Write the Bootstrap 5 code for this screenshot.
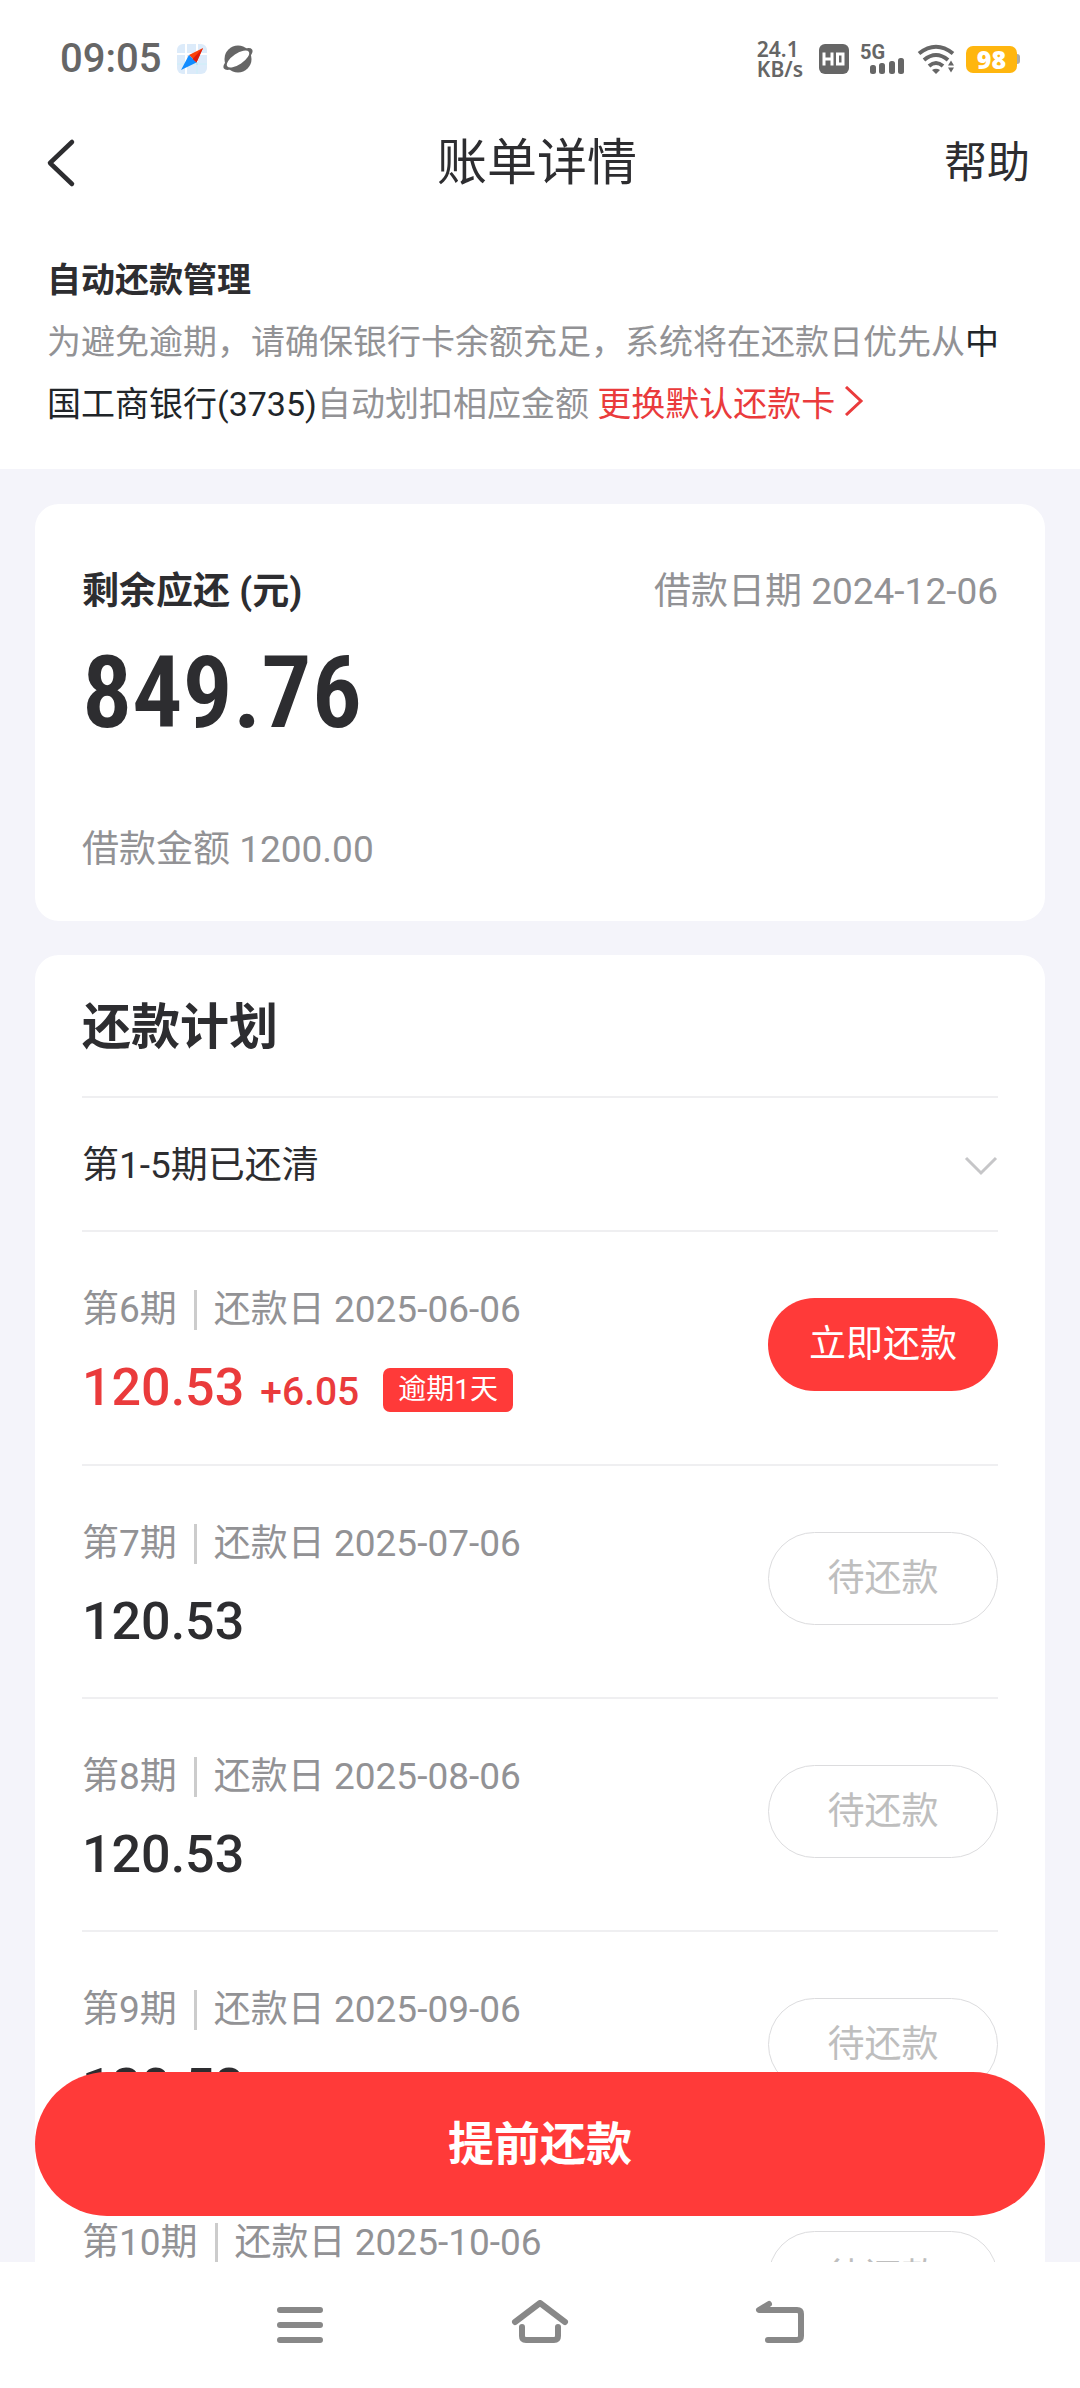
<!DOCTYPE html>
<html lang="zh-CN">
<head>
<meta charset="utf-8">
<meta name="viewport" content="width=device-width, initial-scale=1">
<title>账单详情</title>
<link href="https://cdn.jsdelivr.net/npm/bootstrap@5.3.0/dist/css/bootstrap.min.css" rel="stylesheet">
<style>
:root { --ink: #2d2d30; --muted: #929295; --brand: #ff3a39; --edge: #efeff1; }
body { font-family: Roboto, "Noto Sans CJK SC", sans-serif; font-size: 37px; line-height: 52px; color: var(--ink); background: #f4f4fa; }
svg { display: block; flex: none; }
.status-bar { height: 104px; padding: 14px 60px 0; color: #666; }
.status-time { font-size: 40px; font-weight: 500; line-height: 56px; }
.status-speed { font: 600 21px/20px "Noto Sans", sans-serif; }
.battery-level { width: 51px; height: 27px; border-radius: 7px; background: #ffb60f; font: 800 25px/27px "Open Sans", sans-serif; }
.battery-tip { width: 3px; height: 10px; background: #aaa; border-radius: 0 3px 3px 0; }
.top-bar { height: 118px; padding: 0 50px 0 44px; }
.top-bar > * { flex: 1; }
.page-title { font-size: 50px; font-weight: 400; line-height: 72px; flex: none; }
.help-btn { font-size: 43px; line-height: 60px; color: var(--ink); }
.auto-pay { padding: 27px 60px 34px 47px; font-size: 34px; line-height: 62px; color: var(--muted); }
.section-name { font-size: 34px; font-weight: 700; line-height: 62px; color: var(--ink); }
.brand-link { color: #ea3b3c; }
.panel { border: 0; border-radius: 24px; margin: 0 35px; padding: 0 47px; color: var(--ink); }
.summary { margin-top: 35px; margin-bottom: 34px; padding-top: 62px; padding-bottom: 45px; }
.tone-muted { color: var(--muted); }
.balance { font: 600 100px/110px "Roboto Condensed", Roboto, sans-serif; margin-top: 20px; margin-bottom: 76px; }
.plan-title { font-size: 49px; line-height: 141px; font-weight: 700; padding-top: 2px; margin-bottom: -2px; }
.paid-toggle { height: 134px; border-top: 2px solid var(--edge); color: var(--ink); }
.plan-item { height: 234px; border-top: 2px solid var(--edge); padding: 52px 0 0; }
.plan-item + .plan-item { height: 233px; }
.plan-meta { gap: 17px; color: var(--muted); }
.divider { width: 3px; height: 40px; background: #ccc; }
.amount { font-size: 52px; font-weight: 500; line-height: 60px; }
.late-fee { font-size: 39px; font-weight: 500; line-height: 60px; }
.overdue { font-size: 28px; line-height: 44px; padding: 0 15px; border-radius: 7px; background: var(--brand); color: #fff; }
.tone-brand { color: #ea3b3c; }
.pill { width: 230px; height: 93px; border-radius: 47px; font-size: 37px; line-height: 52px; padding: 0; margin-top: 14px; }
.pill-pay, .pill-pay:hover, .cta, .cta:hover { background: var(--brand); color: #fff; border: 0; }
.pill-wait, .pill-wait:disabled { border: 1px solid #dcdcde; color: #bebebe; opacity: 1; }
.cta { left: 35px; right: 35px; bottom: 46px; height: 144px; border-radius: 72px; font-size: 46px; font-weight: 700; }
.scroll-area { scrollbar-width: none; }
.scroll-area::-webkit-scrollbar { display: none; }
.system-nav { height: 126px; padding: 0 180px; }
.min-h-0 { min-height: 0; }
.amount-line { margin-top: 22px; }
</style>
</head>
<body>
<div class="vh-100 d-flex flex-column">
  <div class="status-bar bg-white d-flex flex-shrink-0 align-items-center justify-content-between">
    <div class="d-flex align-items-center">
      <span class="status-time me-3">09:05</span>
      <svg width="30" height="30" viewBox="0 0 30 30" class="me-3" aria-hidden="true">
        <rect width="30" height="30" rx="6" fill="#dcebfa"/>
        <path d="M9 0v30M0 10h30M0 20h30M20 0v30" stroke="#fff" stroke-width="2"/>
        <path d="M20 18v12M0 20h30" stroke="#a9dcf3" stroke-width="1"/>
        <path d="M26 4 19.500 18.500 12 11Z" fill="#fb4209"/>
        <path d="M4 26 12 11 19.500 18.500Z" fill="#128cff"/>
        <path d="M26 4 19.500 18.500 15.500 15Z" fill="#dd1d0c"/>
      </svg>
      <svg width="30" height="28" viewBox="0 0 30 28" fill="#666" aria-hidden="true">
        <circle cx="15" cy="14" r="13.500"/>
        <ellipse cx="15" cy="14" rx="17" ry="6.500" transform="rotate(-34 15 14)"/>
        <ellipse cx="15" cy="14" rx="13" ry="5.500" transform="rotate(-34 15 14)" fill="#fff"/>
      </svg>
    </div>
    <div class="d-flex align-items-center">
      <div class="status-speed me-3">24.1<br>KB/s</div>
      <svg width="30" height="30" viewBox="0 0 30 30" class="me-2" aria-label="HD">
        <rect width="30" height="30" rx="6" fill="#666"/>
        <path d="M5 8.500v13M13 8.500v13M5 15h8M18.500 10h5.500v10h-5.500Z" fill="none" stroke="#fff" stroke-width="3"/>
      </svg>
      <svg width="50" height="32" viewBox="0 0 50 32" class="me-2" fill="#666" aria-label="5G">
        <text x="3" y="16" font-family="Roboto, sans-serif" font-size="20" font-weight="700">5G</text>
        <rect x="13" y="22" width="6" height="9" rx="2.500"/><rect x="22" y="20" width="6" height="11" rx="2.500"/>
        <rect x="32" y="18" width="6" height="13" rx="2.500"/><rect x="41" y="15" width="6" height="16" rx="2.500"/>
      </svg>
      <svg width="43" height="30" viewBox="0 0 43 30" class="me-2" fill="none" stroke="#666" stroke-width="4" aria-label="Wi-Fi">
        <path d="M4 9.500Q21 -4 38 9.500M9 16Q21 6 33 16M14 22Q21 16 28 22"/>
        <path d="M17 26Q21 23.500 25 26L21 30Z" fill="#666" stroke="none"/>
        <path d="M33 21.500 36 16.500 39 21.500ZM33 23.500 36 28.500 39 23.500Z" fill="#666" stroke="none"/>
      </svg>
      <div class="battery-level text-white text-center">98</div><span class="battery-tip"></span>
    </div>
  </div>

  <header class="top-bar bg-white d-flex flex-shrink-0 align-items-center">
    <div class="d-flex">
      <button type="button" class="btn p-0 border-0" aria-label="返回">
        <svg width="34" height="50" viewBox="0 0 34 50" fill="none" stroke="#2d2d30" stroke-width="4.500" stroke-linecap="round" stroke-linejoin="round"><path d="M28 4 6 25 28 46"/></svg>
      </button>
    </div>
    <h1 class="page-title m-0">账单详情</h1>
    <div class="text-end"><button type="button" class="btn help-btn p-0 border-0">帮助</button></div>
  </header>

  <main class="position-relative flex-fill min-h-0">
    <div class="scroll-area h-100 overflow-auto">
      <section class="auto-pay bg-white">
        <h2 class="section-name m-0">自动还款管理</h2>
        <p class="m-0">为避免逾期，请确保银行卡余额充足，系统将在还款日优先从<span class="text-dark">中国工商银行(3735)</span>自动划扣相应金额 <a href="#" class="brand-link text-decoration-none">更换默认还款卡<svg class="d-inline-block ms-2 align-baseline" width="22" height="30" viewBox="0 0 22 30" fill="none" stroke="#ea3b3c" stroke-width="3"><path d="M3 1 18 15 3 29"/></svg></a></p>
      </section>

      <section class="card panel summary">
        <div class="d-flex justify-content-between">
          <strong>剩余应还 (元)</strong>
          <span class="tone-muted">借款日期 2024-12-06</span>
        </div>
        <div class="balance">849.76</div>
        <div class="tone-muted">借款金额 1200.00</div>
      </section>

      <section class="card panel">
        <h2 class="plan-title mt-0">还款计划</h2>
        <button type="button" class="paid-toggle bg-transparent border-start-0 border-end-0 border-bottom-0 px-0 pt-1 pb-0 w-100 d-flex align-items-center justify-content-between" aria-expanded="false">
          第1-5期已还清
          <svg width="34" height="20" viewBox="0 0 34 20" fill="none" stroke="#c6c6c8" stroke-width="3"><path d="M2 2 17 17 32 2"/></svg>
        </button>
        <ul class="list-unstyled m-0">
          <li class="plan-item d-flex justify-content-between align-items-start">
            <div>
              <div class="plan-meta d-flex align-items-center"><span>第6期</span><span class="divider"></span><span>还款日 2025-06-06</span></div>
              <div class="amount-line d-flex align-items-center tone-brand"><div class="d-flex align-items-baseline"><span class="amount me-3">120.53</span><span class="late-fee me-4">+6.05</span></div><span class="overdue">逾期1天</span></div>
            </div>
            <button type="button" class="btn pill pill-pay">立即还款</button>
          </li>
          <li class="plan-item d-flex justify-content-between align-items-start">
            <div>
              <div class="plan-meta d-flex align-items-center"><span>第7期</span><span class="divider"></span><span>还款日 2025-07-06</span></div>
              <div class="amount amount-line">120.53</div>
            </div>
            <button type="button" class="btn pill pill-wait" disabled>待还款</button>
          </li>
          <li class="plan-item d-flex justify-content-between align-items-start">
            <div>
              <div class="plan-meta d-flex align-items-center"><span>第8期</span><span class="divider"></span><span>还款日 2025-08-06</span></div>
              <div class="amount amount-line">120.53</div>
            </div>
            <button type="button" class="btn pill pill-wait" disabled>待还款</button>
          </li>
          <li class="plan-item d-flex justify-content-between align-items-start">
            <div>
              <div class="plan-meta d-flex align-items-center"><span>第9期</span><span class="divider"></span><span>还款日 2025-09-06</span></div>
              <div class="amount amount-line">120.53</div>
            </div>
            <button type="button" class="btn pill pill-wait" disabled>待还款</button>
          </li>
          <li class="plan-item d-flex justify-content-between align-items-start">
            <div>
              <div class="plan-meta d-flex align-items-center"><span>第10期</span><span class="divider"></span><span>还款日 2025-10-06</span></div>
              <div class="amount amount-line">120.53</div>
            </div>
            <button type="button" class="btn pill pill-wait" disabled>待还款</button>
          </li>
        </ul>
      </section>
    </div>
    <button type="button" class="btn cta position-absolute">提前还款</button>
  </main>

  <nav class="system-nav bg-white d-flex flex-shrink-0 align-items-center" aria-label="系统导航">
    <button type="button" class="btn border-0 p-0 flex-fill d-flex justify-content-center" aria-label="最近任务">
      <svg width="60" height="50" viewBox="0 0 60 50" fill="none" stroke="#888" stroke-width="6" stroke-linecap="round"><path d="M10 10H50M10 25H50M10 40H50"/></svg>
    </button>
    <button type="button" class="btn border-0 p-0 flex-fill d-flex justify-content-center" aria-label="主屏幕">
      <svg width="60" height="50" viewBox="0 0 60 50" fill="none" stroke="#888" stroke-width="6" stroke-linecap="round" stroke-linejoin="round"><path d="M5 22 30 3 55 22M12 27V36Q12 40 16 40H44Q48 40 48 36V27"/></svg>
    </button>
    <button type="button" class="btn border-0 p-0 flex-fill d-flex justify-content-center" aria-label="返回上一级">
      <svg width="60" height="50" viewBox="0 0 60 50" fill="none" stroke="#888" stroke-width="6" stroke-linecap="round" stroke-linejoin="round"><path d="M19 4 9 10H47Q51 10 51 14V36Q51 40 47 40H18"/></svg>
    </button>
  </nav>
</div>
<script src="https://cdn.jsdelivr.net/npm/bootstrap@5.3.0/dist/js/bootstrap.bundle.min.js"></script>
</body>
</html>
